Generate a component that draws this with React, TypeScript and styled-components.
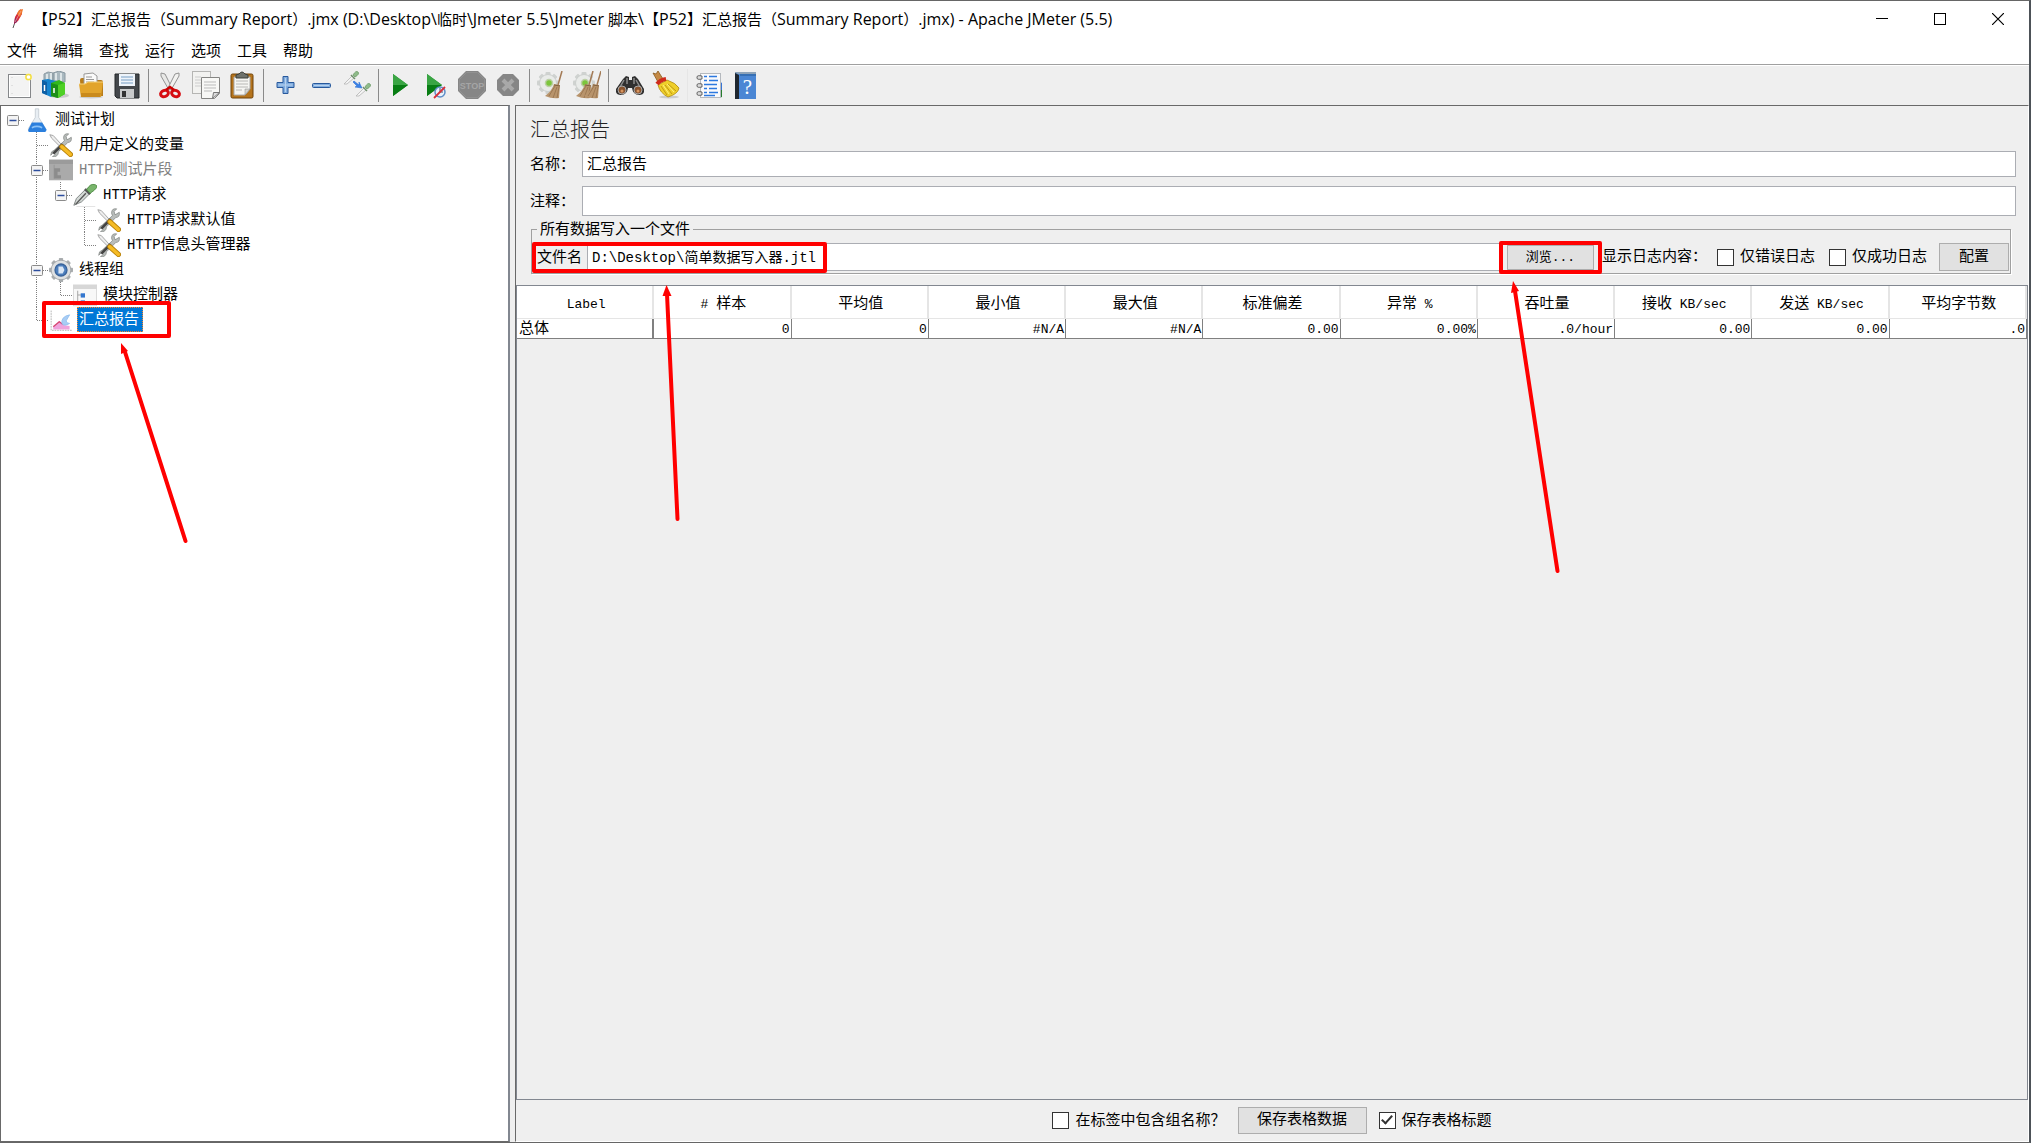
import React, { useState } from "react";
import styled, { createGlobalStyle, css } from "styled-components";

const GlobalStyle = createGlobalStyle`
  *, *::before, *::after { box-sizing: border-box; }
  body { margin: 0; background: #efefef; overflow: hidden; }
  button, input { font: inherit; color: inherit; }
`;

const cjk = `"Noto Sans CJK SC", sans-serif`;

const Window = styled.div`
  display: flex;
  flex-direction: column;
  height: 100vh;
  border: 1px solid #666;
  border-left: 0;
  border-right: 2px solid #4d5258;
  background: #efefef;
  color: #000;
  font-family: "Liberation Mono", ${cjk};
  font-size: 15px;
  line-height: 20px;
  position: relative;
`;

const TitleBar = styled.header`
  display: flex;
  align-items: center;
  height: 37px;
  background: #fff;
  padding: 0 2px 2px 8px;
  gap: 7px;
  font-family: "Open Sans", ${cjk};
`;

const TitleText = styled.h1`
  flex: 1;
  margin: 0;
  font-size: 15px;
  font-weight: 400;
  white-space: pre;
`;

const CaptionButton = styled.button`
  display: grid;
  place-items: center;
  width: 58px;
  height: 34px;
  padding: 0;
  border: 0;
  background: none;
  & + & { margin-left: -7px; }
`;

const MenuBar = styled.nav`
  display: flex;
  gap: 16px;
  height: 26px;
  padding: 0 0 2px 7px;
  background: #fff;
`;

const MenuButton = styled.button`
  padding: 0;
  border: 0;
  background: none;
  font-family: ${cjk};
`;

const ToolBar = styled.div`
  display: flex;
  align-items: center;
  height: 41px;
  padding-left: 1px;
  border-top: 1px solid #a0a0a0;
  box-shadow: inset 0 1px #fff;
`;

const ToolButton = styled.button`
  display: grid;
  place-items: center;
  width: 36px;
  height: 36px;
  padding: 0;
  border: 0;
  background: none;
`;

const Separator = styled.span<{ $faint?: boolean }>`
  width: 1px;
  height: 33px;
  margin: 0 3px;
  background: ${(p) => (p.$faint ? "#e6e6e6" : "#8a8a8a")};
`;

const Body = styled.main`
  flex: 1;
  display: flex;
  gap: 5px;
  min-height: 0;
`;

const TreePane = styled.aside`
  flex: 0 0 510px;
  padding-top: 1px;
  padding-bottom: 1px;
  background: #fff;
  border: 1px solid #696969;
  border-right: 2px solid #828790;
`;

const Tree = styled.ul`
  list-style: none;
  margin: 0;
  padding: 0;
`;

const TreeRow = styled.li`
  display: flex;
  align-items: center;
  height: 25px;
  svg { flex: none; display: block; }
`;

const ToggleCell = styled.button`
  padding: 0;
  border: 0;
  background: none;
  width: 24px;
  height: 25px;
`;

const TreeLabel = styled.span<{ $selected?: boolean; $disabled?: boolean }>`
  height: 25px;
  line-height: 25px;
  margin-left: 4px;
  padding: 0 3px 0 1px;
  border: 1px solid transparent;
  white-space: nowrap;
  ${(p) => p.$disabled && css`color: #808080;`}
  ${(p) =>
    p.$selected &&
    css`
      background: #0078d7;
      color: #fff;
      border: 1px dotted #ff8728;
    `}
`;

const Latin = styled.span<{ $size?: number }>`
  font-size: ${(p) => p.$size ?? 13}px;
`;

const Editor = styled.section`
  flex: 1;
  min-width: 0;
  display: flex;
  flex-direction: column;
  border: 1px solid #696969;
  border-right-color: #fff;
  border-bottom-color: #fff;
`;

const Heading = styled.h2`
  margin: 10px 14px;
  font-family: ${cjk};
  font-size: 20px;
  line-height: 25px;
  font-weight: 300;
  color: #222;
`;

const Field = styled.div`
  display: flex;
  align-items: center;
  margin: 0 12px 9px 14px;
`;

const FieldLabel = styled.label`
  flex: 0 0 52px;
  padding-top: 3px;
  white-space: nowrap;
`;

const TextInput = styled.input<{ $height: number; $size?: number }>`
  flex: 1;
  min-width: 0;
  height: ${(p) => p.$height}px;
  padding: 0 4px 2px 4px;
  border: 1px solid #abadb3;
  background: #fff;
  font-size: ${(p) => p.$size ?? 15}px;
  outline: 0;
`;

const Group = styled.fieldset`
  display: block;
  min-width: 0;
  margin: -5px 17px 11px 15px;
  padding: 4px 1px 2px 5px;
  border: 1px solid #a0a0a0;
  box-shadow: 1px 1px 0 #fff;
`;

const Legend = styled.legend`
  padding: 3px 3px 0;
  line-height: 16px;
`;

const GroupRow = styled.div`
  display: flex;
  align-items: center;
  height: 28px;
`;

const FileLabel = styled.label`
  flex: 0 0 50px;
  padding-top: 3px;
`;

const PushButton = styled.button<{ $width: number; $height: number; $small?: boolean }>`
  width: ${(p) => p.$width}px;
  height: ${(p) => p.$height}px;
  padding: 1px 0 0;
  border: 1px solid #adadad;
  background: #e1e1e1;
  font-size: ${(p) => (p.$small ? 13 : 15)}px;
  line-height: 20px;
`;

const BrowseSlot = styled.span`
  display: flex;
  padding: 0 8px 0 7px;
`;

const LogOptions = styled.div`
  display: flex;
  align-items: center;
  gap: 14px;
  margin-right: 12px;
  white-space: nowrap;
`;

const LogCaption = styled.span`
  padding-top: 2px;
  margin-right: -4px;
`;

const CheckLabel = styled.label`
  display: flex;
  align-items: center;
  gap: 6px;
  white-space: nowrap;
`;

const CheckText = styled.span`
  padding-top: 2px;
`;

const CheckBox = styled.input`
  appearance: none;
  flex: none;
  display: grid;
  place-items: center;
  width: 17px;
  height: 17px;
  margin: 0;
  border: 1px solid #333;
  background: #fff;
  &:checked::after {
    content: "";
    width: 6px;
    height: 11px;
    margin-bottom: 4px;
    border: solid #333;
    border-width: 0 2px 2px 0;
    transform: rotate(42deg);
  }
`;

const TableArea = styled.div`
  flex: 1;
  min-height: 0;
  border: 1px solid #828790;
`;

const Table = styled.table`
  width: 100%;
  table-layout: fixed;
  border-collapse: separate;
  border-spacing: 0;
  background: #fff;
  th, td { white-space: nowrap; overflow: hidden; font-weight: 400; }
  th {
    height: 33px;
    padding: 5px 0 0 3px;
    border-right: 2px solid #e5e5e5;
    border-bottom: 1px solid #e5e5e5;
    text-align: center;
  }
  td {
    height: 20px;
    line-height: 17px;
    padding: 2px 1px 0 3px;
    border-right: 1px solid #808080;
    border-bottom: 1px solid #808080;
    text-align: right;
  }
  td:first-child { text-align: left; padding-left: 2px; border-right-width: 2px; }
`;

const Footer = styled.footer`
  display: flex;
  align-items: center;
  justify-content: center;
  gap: 12px;
  height: 41px;
`;

const Annotations = styled.svg`
  position: absolute;
  left: 0;
  top: -1px;
  pointer-events: none;
`;

/* ---------- icons ---------- */

const Icon = ({ children, size = 28 }: { children: React.ReactNode; size?: number }) => (
  <svg width={size} height={size} viewBox="0 0 28 28" aria-hidden="true">
    {children}
  </svg>
);

const Feather = () => (
  <svg width="18" height="22" viewBox="0 0 18 22" aria-hidden="true">
    <path d="M5 20 L7 14" stroke="#555" strokeWidth="1" />
    <path d="M6 16 L7 9 L10 4 L13 1 L14 6 L10 13 Z" fill="#d32a3a" />
    <path d="M9 6 L11 2 L15 1 L14 5 L12 9 Z" fill="#f0792a" />
    <path d="M6 16 L7 10 L9 11 L9 14 Z" fill="#8d2560" />
    <path d="M7 14 L13 3" stroke="#f7a9a0" strokeWidth="0.7" />
  </svg>
);

const gearTeeth = (cx: number, cy: number, r: number, color: string) =>
  [0, 45, 90, 135].map((a) => (
    <rect key={a} x={cx - 2.5} y={cy - r} width="5" height={r * 2} rx="1" fill={color} transform={`rotate(${a} ${cx} ${cy})`} />
  ));

const NewIcon = () => (
  <Icon>
    <rect x="3.5" y="3.5" width="22" height="23" fill="#f3f3f3" stroke="#85878a" />
    <rect x="4.5" y="4.5" width="20" height="21" fill="none" stroke="#fff" />
    <path d="M7 6v19" stroke="#ccc" strokeDasharray="1 7" />
    <circle cx="23.5" cy="6" r="3.5" fill="#fff8a8" opacity=".7" />
    <circle cx="23.5" cy="6" r="2.6" fill="#fff" stroke="#f3df45" strokeWidth="1.5" />
  </Icon>
);

const TemplatesIcon = () => (
  <Icon>
    <ellipse cx="18" cy="24.5" rx="10" ry="2.5" fill="#bbb" opacity=".7" />
    <path d="M3 3l4-2 5 1v8H3zM12 2l6-2 6 2v9H12z" fill="#a9b8bf" stroke="#8b9aa2" />
    <path d="M6 3v6M10 2v7M15 2v7M20 2v8" stroke="#eef3f5" strokeWidth="1.5" />
    <path d="M1 9l6-1 8 2v13l-5 3-9-4z" fill="#1684cf" />
    <path d="M1 9l5 2v13l-5-2z" fill="#0e5fa5" />
    <path d="M3.500 14v6" stroke="#fff" strokeWidth="1.5" />
    <path d="M10 12l8-3 6 3v11l-7 4-7-2z" fill="#32b81c" />
    <path d="M10 12l7 2v13l-7-2z" fill="#1b8e17" />
    <path d="M17 14l7-2v11l-7 4z" fill="#4ed025" />
    <path d="M13 17v5" stroke="#fff" strokeWidth="1.5" />
  </Icon>
);

const OpenIcon = () => (
  <Icon>
    <ellipse cx="14" cy="26" rx="12" ry="1.5" fill="#ccc" />
    <path d="M3 9q0-2 2-2h4l2 2h13q2 0 2 2v14H4z" fill="#b87c1a" />
    <path d="M7 3l9-1 4 3v12H7z" fill="#fafafa" stroke="#999" />
    <path d="M9 6h6M9 8.5h8M9 11h8" stroke="#9a9a9a" />
    <path d="M2 13h6l3-2h15l-2 15H4z" fill="#e2a42b" />
    <path d="M2 13h6l3-2h15" stroke="#f6d27a" fill="none" />
    <path d="M4 22h20l-1 4H4z" fill="#c98a1c" />
  </Icon>
);

const SaveIcon = () => (
  <Icon>
    <path d="M2 3h24v24H4l-2-2z" fill="#43474b" stroke="#25282a" />
    <rect x="6" y="3" width="16" height="12" fill="#eef4fa" />
    <path d="M8 6h12M8 9h12M8 12h12" stroke="#9fbbd6" strokeWidth="1.5" />
    <rect x="7" y="18" width="14" height="9" fill="#c8cacb" />
    <rect x="9" y="20" width="4" height="6" fill="#333" />
  </Icon>
);

const CutIcon = () => (
  <Icon>
    <path d="M5 2l4 1 7 14-3 2L5 5z" fill="#e8e8e6" stroke="#929292" />
    <path d="M23 2l-4 1-7 14 3 2 8-14z" fill="#f2f2f0" stroke="#929292" />
    <ellipse cx="8.5" cy="22.5" rx="4" ry="3" fill="none" stroke="#d60d12" strokeWidth="3" transform="rotate(-20 8.5 22.5)" />
    <ellipse cx="19.5" cy="22.5" rx="4" ry="3" fill="none" stroke="#d60d12" strokeWidth="3" transform="rotate(20 19.5 22.5)" />
    <path d="M10 19l4-3 4 3" stroke="#c00" strokeWidth="2.5" fill="none" />
  </Icon>
);

const CopyIcon = () => (
  <Icon>
    <rect x="0.5" y="0.5" width="18" height="22" fill="#f2f2f0" stroke="#b5b5b3" />
    <path d="M3 6h6M3 9h6M3 12h6M3 15h6" stroke="#ccc" />
    <path d="M9.5 6.5h18v16l-5 5h-13z" fill="#f8f8f6" stroke="#858583" />
    <path d="M12 11h12M12 14h12M12 17h12M12 20h8" stroke="#bbb" />
    <path d="M27.5 21.5h-6l-1 6z" fill="#ddd" stroke="#777" />
  </Icon>
);

const PasteIcon = () => (
  <Icon>
    <rect x="3" y="3" width="22" height="24" rx="1.5" fill="#b5741c" stroke="#6f430a" />
    <path d="M6 6h16v12l-5 6H6z" fill="#f5f5f2" stroke="#aaa" />
    <path d="M8 10h12M8 13h12M8 16h12M8 19h6" stroke="#b8b8b6" />
    <path d="M22 18h-5v6z" fill="#d5d5d0" stroke="#888" strokeWidth=".5" />
    <path d="M8 7V4l3-1q3-4 6 0l3 1v3z" fill="#6d716b" stroke="#3d403b" />
  </Icon>
);

const PlusIcon = () => (
  <Icon>
    <path d="M12 5.5h5v6h6v5h-6v6h-5v-6H6v-5h6z" fill="#81addf" stroke="#28599c" />
    <path d="M14.5 7v14M7.5 14h14" stroke="#b8d2ee" />
  </Icon>
);

const MinusIcon = () => (
  <Icon>
    <rect x="5.5" y="12.5" width="18" height="4" rx="1" fill="#81addf" stroke="#28599c" />
    <path d="M7 14.5h15" stroke="#b8d2ee" />
  </Icon>
);

const pipette = (tx: number, ty: number) => (
  <g transform={`translate(${tx} ${ty})`}>
    <path d="M0 13L8 5l2 2-7 6z" fill="#f4f4f4" stroke="#b5b5b5" strokeWidth=".8" />
    <path d="M7 4l4 4" stroke="#6f8f6c" strokeWidth="1.5" />
    <path d="M9 4q3-5 5-3t-3 5z" fill="#8fbb8a" stroke="#6f9e6a" strokeWidth=".8" />
  </g>
);

const ToggleIcon = () => (
  <Icon>
    {pipette(1, 0)}
    {pipette(13, 12)}
    <path d="M11 10l5 4v-3l3 6-7-1 2-1-4-4z" fill="#3a82e8" stroke="#2d6fd2" strokeWidth=".6" />
  </Icon>
);

const PlayShape = ({ x = 0 }: { x?: number }) => (
  <g transform={`translate(${x} 0)`}>
    <path d="M7 3L22 14 7 25z" fill="#23952d" />
    <path d="M7 3L22 14H7z" fill="#3aa544" />
    <path d="M7 14h15L7 25z" fill="#087d14" />
  </g>
);

const PlayIcon = () => (
  <Icon>
    <PlayShape />
  </Icon>
);

const PlayNoPauseIcon = () => (
  <Icon>
    <PlayShape x={-2} />
    <circle cx="18" cy="21" r="5" fill="#e9f1fb" stroke="#5f8ec7" strokeWidth="1.5" />
    <path d="M18 17v4h3" stroke="#456" fill="none" />
    <path d="M12 27L23 16" stroke="#d8303a" strokeWidth="1.8" />
  </Icon>
);

const StopIcon = () => (
  <Icon>
    <path d="M8 0h12l8 8v12l-8 8H8l-8-8V8z" fill="#868686" />
    <path d="M8.5 1.5h11l7 7v11l-7 7h-11l-7-7v-11z" fill="none" stroke="#919191" />
    <text x="14" y="18" textAnchor="middle" fontFamily="Liberation Sans, sans-serif" fontWeight="700" fontSize="9" fill="#a5a5a5">STOP</text>
  </Icon>
);

const ShutdownIcon = () => (
  <Icon>
    <path d="M9 3h10l6 6v10l-6 6H9l-6-6V9z" fill="#868686" />
    <path d="M9 9l10 10M19 9L9 19" stroke="#a9a9a9" strokeWidth="4" />
  </Icon>
);

const BroomHead = ({ x }: { x: number }) => (
  <g transform={`translate(${x} 0)`}>
    <path d="M25 0l-4 14" stroke="#a37a55" strokeWidth="1.5" />
    <path d="M17 13l6 1-1 13q-7 1-14-2 7-5 9-12z" fill="#b8946c" />
    <path d="M18 15l-6 10M20 16l-4 11M22 16l-2 11" stroke="#94714d" strokeWidth=".8" />
    <path d="M17 14l6 1" stroke="#80603f" />
  </g>
);

const SmallGear = () => (
  <g>
    {gearTeeth(11, 12, 11, "#cfd2d0")}
    <circle cx="11" cy="12" r="8.5" fill="#e9ebe9" stroke="#cccfcd" />
    <circle cx="12" cy="12" r="3.5" fill="#7cc63c" stroke="#bcd0a6" strokeWidth="1.5" />
  </g>
);

const ClearIcon = () => (
  <Icon>
    <SmallGear />
    <BroomHead x={0} />
  </Icon>
);

const ClearAllIcon = () => (
  <Icon>
    <SmallGear />
    <BroomHead x={-5} />
    <BroomHead x={3} />
  </Icon>
);

const SearchIcon = () => (
  <Icon>
    <path d="M10 5l3 1v3h3V6l3-1 3 3 6 10q1 6-5 6-6 0-7-7h-4q-1 7-7 7-6 0-5-6L7 8z" fill="#303030" />
    <path d="M8 9l-4 7M20 9l4 7M11 7v6M18 7v6" stroke="#8c8c8c" strokeWidth="1.5" />
    <circle cx="6" cy="19" r="4" fill="#89542f" stroke="#a8a8a8" />
    <circle cx="22" cy="19" r="4" fill="#89542f" stroke="#a8a8a8" />
    <circle cx="6" cy="20" r="1.5" fill="#d8955f" />
    <circle cx="22" cy="20" r="1.5" fill="#d8955f" />
  </Icon>
);

const ResetIcon = () => (
  <Icon>
    <ellipse cx="17" cy="26" rx="10" ry="1.5" fill="#ccc" />
    <path d="M1 2l3 1 2-3 5 8-5 3z" fill="#c58a45" stroke="#8a5a1e" strokeWidth=".8" />
    <path d="M6 14l9-5q9 3 12 8-1 6-11 9-8-4-10-12z" fill="#efcf2a" stroke="#b08a10" strokeWidth=".8" />
    <path d="M9 15l6 9M13 14l7 9M16 13l8 7" stroke="#c19a14" />
    <path d="M11 14l6 9M15 13l7 8" stroke="#fff27c" />
    <path d="M5 13q3-4 9-5" stroke="#cf2b1c" strokeWidth="4" fill="none" />
  </Icon>
);

const FunctionIcon = () => (
  <Icon>
    <path d="M24 18l3 1v7l-3 1z" fill="#257c2c" />
    <path d="M24 10l3 2v7h-3z" fill="#3774d4" />
    <rect x="5.5" y="2.5" width="20" height="24" fill="#f9fafc" stroke="#b5b9be" />
    <path d="M9 5.5h3M14 5.5h8M9 9.500h3M14 9.500h9M9 13.500h13M9 17.500h3M14 17.500h8M9 21.500h3M14 21.500h9M9 24.500h11" stroke="#2d79df" strokeWidth="1.4" />
    {[6, 14, 22].map((y) => (
      <path key={y} d={`M2 ${y}q0-2 5-1v3q-5 1-5-1z`} fill="#ddd" stroke="#444" strokeWidth=".8" />
    ))}
  </Icon>
);

const HelpIcon = () => (
  <Icon>
    <path d="M4 1h21v4H4z" fill="#8ea3b8" />
    <path d="M4 2l3 1h18v25H4z" fill="#4a86d4" />
    <path d="M4 2l4 2v24H4z" fill="#1f2730" />
    <path d="M9 4h16" stroke="#235894" />
    <text x="16.5" y="23" textAnchor="middle" fontFamily="Liberation Serif, serif" fontSize="21" fill="#fff">?</text>
  </Icon>
);

const FlaskIcon = () => (
  <Icon size={24}>
    <path d="M12 1h4v10l8 13q1 3-2 3H6q-3 0-2-3l8-13z" fill="#e8eef3" stroke="#c3cbd2" />
    <path d="M8 17h12l5 8q0 3-3 3H6q-3 0-2-3z" fill="#2b7fdd" />
    <path d="M8 23q6-3 12 0" stroke="#8bc2f7" strokeWidth="2" fill="none" />
  </Icon>
);

const ToolsIcon = () => (
  <Icon size={24}>
    <path d="M1 2l4 1 10 11-2 2L3 6z" fill="#eee" stroke="#9c9c9c" />
    <path d="M26 5l-5 3-1-4 3-3q-6-1-6 5l1 3L6 20q-4 1-4 6l3-3 2 2-3 3q7 0 7-6L22 11q5 0 4-6z" fill="#b9bdbb" stroke="#7b7f7d" strokeWidth=".8" />
    <path d="M16 13L8 21l-3 3" stroke="#444" strokeWidth="3" />
    <path d="M15 16l10 9" stroke="#b88108" strokeWidth="6" strokeLinecap="round" />
    <path d="M15 16l10 9" stroke="#f5bb25" strokeWidth="4" strokeLinecap="round" />
  </Icon>
);

const FragmentIcon = () => (
  <Icon size={24}>
    <rect x="0" y="2" width="28" height="24" fill="#aaa" />
    <path d="M0 2h28v5H0z" fill="#9b9b9b" />
    <path d="M6 8v16" stroke="#959595" />
    <path d="M6 12h7v4h-3v4h4v4H6z" fill="#8c8c8c" />
  </Icon>
);

const SamplerIcon = () => (
  <Icon size={24}>
    <path d="M4 27.500h22" stroke="#ddd" />
    <path d="M1 26l3-8L14 8l5 5-9 9z" fill="#d4d9d6" stroke="#737977" />
    <path d="M3 25L15 12" stroke="#555" strokeWidth="1.5" />
    <path d="M14 7l6 6" stroke="#555" strokeWidth="3" />
    <path d="M16 8q4-8 10-6t-6 10z" fill="#79b56c" stroke="#4d8a44" />
  </Icon>
);

const GearIcon = () => (
  <Icon size={24}>
    {gearTeeth(14, 14, 14, "#a9adaf")}
    <circle cx="14" cy="14" r="11.5" fill="#dfe1e2" stroke="#a0a4a6" />
    <circle cx="14" cy="14" r="7" fill="#4d7fbd" stroke="#39639b" strokeWidth="1.5" />
    <path d="M11 10h5l2 4-2 4h-5z" fill="#dbe7f5" />
  </Icon>
);

const ControllerIcon = () => (
  <Icon size={24}>
    <rect x="0.5" y="2.5" width="27" height="24" fill="#f8f8f8" stroke="#d6d6d6" />
    <path d="M0 2h28v5H0z" fill="#d7d7d7" />
    <path d="M5.5 9v16M5.5 14h4M5.5 22h4" stroke="#999" />
    <rect x="9" y="12" width="5" height="5" fill="#3477cf" />
    <rect x="9" y="20" width="5" height="4" fill="#6d9edf" />
  </Icon>
);

const ChartIcon = () => (
  <Icon size={24}>
    <path d="M2.500 3v23h24" stroke="#aaa" fill="none" strokeDasharray="2 1" />
    <path d="M5 25v-4l7-6 6 5 6 1v4z" fill="#efa3dc" />
    <path d="M5 22l7-6 4 3" stroke="#d74b70" strokeWidth="1.5" fill="none" />
    <path d="M15 18q-1-8 9-10l-4 7q0 3 4 3-6 4-9 0z" fill="#a9cdf4" stroke="#8fbdf0" />
  </Icon>
);

const Guide = ({ kind }: { kind: string }) => {
  const dots = { stroke: "#808080", strokeDasharray: "1 1" };
  return (
    <svg width="24" height="25" viewBox="0 0 24 25" aria-hidden="true">
      {(kind === "v" || kind === "t" || kind === "e") && <path d="M11.5 0v25" {...dots} />}
      {(kind === "l" || kind === "f") && <path d="M11.5 0v13" {...dots} />}
      {kind !== "v" && kind !== "" && <path d="M12 13.5h12" {...dots} />}
      {(kind === "e" || kind === "f" || kind === "r") && (
        <g>
          <rect x="6.5" y="8.5" width="11" height="10" rx="1" fill="#f4f4f4" stroke="#8b8b8b" />
          <path d="M8.5 13.5h7" stroke="#2c4d9e" strokeWidth="1.5" />
        </g>
      )}
    </svg>
  );
};

/* ---------- data ---------- */

type Node = {
  guides: string[];
  icon: React.ReactNode;
  latin?: string;
  text: string;
  disabled?: boolean;
};

const nodes: Node[] = [
  { guides: ["r"], icon: <FlaskIcon />, text: "测试计划" },
  { guides: ["", "t"], icon: <ToolsIcon />, text: "用户定义的变量" },
  { guides: ["", "e"], icon: <FragmentIcon />, latin: "HTTP", text: "测试片段", disabled: true },
  { guides: ["", "v", "f"], icon: <SamplerIcon />, latin: "HTTP", text: "请求" },
  { guides: ["", "v", "", "t"], icon: <ToolsIcon />, latin: "HTTP", text: "请求默认值" },
  { guides: ["", "v", "", "l"], icon: <ToolsIcon />, latin: "HTTP", text: "信息头管理器" },
  { guides: ["", "e"], icon: <GearIcon />, text: "线程组" },
  { guides: ["", "v", "l"], icon: <ControllerIcon />, text: "模块控制器" },
  { guides: ["", "l"], icon: <ChartIcon />, text: "汇总报告" },
];

const fileTitle =
  "【P52】汇总报告（Summary Report）.jmx (D:\\Desktop\\临时\\Jmeter 5.5\\Jmeter 脚本\\【P52】汇总报告（Summary Report）.jmx) - Apache JMeter (5.5)";

const menus = ["文件", "编辑", "查找", "运行", "选项", "工具", "帮助"];

const toolGroups: [string, React.ComponentType][][] = [
  [["新建", NewIcon], ["模板", TemplatesIcon], ["打开", OpenIcon], ["保存", SaveIcon]],
  [["剪切", CutIcon], ["复制", CopyIcon], ["粘贴", PasteIcon]],
  [["展开", PlusIcon], ["折叠", MinusIcon], ["切换", ToggleIcon]],
  [["启动", PlayIcon], ["不停顿启动", PlayNoPauseIcon], ["停止", StopIcon], ["关闭", ShutdownIcon]],
  [["清除", ClearIcon], ["清除全部", ClearAllIcon]],
  [["查找", SearchIcon], ["重置查找", ResetIcon]],
  [["函数助手", FunctionIcon], ["帮助", HelpIcon]],
];

const columns: { head: React.ReactNode; value: React.ReactNode }[] = [
  { head: <Latin>Label</Latin>, value: "总体" },
  { head: <><Latin># </Latin>样本</>, value: <Latin>0</Latin> },
  { head: "平均值", value: <Latin>0</Latin> },
  { head: "最小值", value: <Latin>#N/A</Latin> },
  { head: "最大值", value: <Latin>#N/A</Latin> },
  { head: "标准偏差", value: <Latin>0.00</Latin> },
  { head: <>异常<Latin> %</Latin></>, value: <Latin>0.00%</Latin> },
  { head: "吞吐量", value: <Latin>.0/hour</Latin> },
  { head: <>接收<Latin> KB/sec</Latin></>, value: <Latin>0.00</Latin> },
  { head: <>发送<Latin> KB/sec</Latin></>, value: <Latin>0.00</Latin> },
  { head: "平均字节数", value: <Latin>.0</Latin> },
];

const Marks = () => (
  <Annotations width="2029" height="600" viewBox="0 0 2029 600" aria-hidden="true">
    <g fill="none" stroke="#f00" strokeWidth="4" strokeLinejoin="round" strokeLinecap="round">
      <rect x="44" y="303" width="125" height="33" />
      <rect x="534" y="244" width="291" height="27" />
      <rect x="1501" y="243" width="99" height="29" />
      <path d="M125 352L185.500 541" />
      <path d="M667 294L677.500 519" />
      <path d="M1515 291L1557.500 571" />
    </g>
    <g fill="#f00">
      <path d="M121 343l7 8-7 3z" />
      <path d="M666.500 285l5 11h-9z" />
      <path d="M1513 281l6 10-8 2z" />
    </g>
  </Annotations>
);

export default function App() {
  const [selected, setSelected] = useState(8);
  return (
    <>
      <GlobalStyle />
      <Window>
        <TitleBar>
          <Feather />
          <TitleText>
            {fileTitle.split(/([\x20-\x7e]+)/).map((part, i) =>
              i % 2 ? (
                <Latin key={i} $size={16}>{part}</Latin>
              ) : (
                part
              )
            )}
          </TitleText>
          <CaptionButton aria-label="最小化">
            <svg width="12" height="12"><path d="M0 5.5h12" stroke="#000" /></svg>
          </CaptionButton>
          <CaptionButton aria-label="最大化">
            <svg width="12" height="12"><rect x=".5" y=".5" width="11" height="11" fill="none" stroke="#000" /></svg>
          </CaptionButton>
          <CaptionButton aria-label="关闭窗口">
            <svg width="12" height="12"><path d="M0 0l12 12M12 0L0 12" stroke="#000" strokeWidth="1.2" /></svg>
          </CaptionButton>
        </TitleBar>
        <MenuBar>
          {menus.map((m) => (
            <MenuButton key={m}>{m}</MenuButton>
          ))}
        </MenuBar>
        <ToolBar role="toolbar">
          {toolGroups.map((group, i) => (
            <React.Fragment key={i}>
              {i > 0 && <Separator $faint={i === 6} />}
              {group.map(([name, Glyph]) => (
                <ToolButton key={name} aria-label={name}>
                  <Glyph />
                </ToolButton>
              ))}
            </React.Fragment>
          ))}
        </ToolBar>
        <Body>
          <TreePane>
            <Tree role="tree">
              {nodes.map((n, i) => (
                <TreeRow key={i} role="treeitem" aria-selected={i === selected} onClick={() => setSelected(i)}>
                  {n.guides.map((g, k) =>
                    g === "e" || g === "f" || g === "r" ? (
                      <ToggleCell key={k} aria-label="折叠节点">
                        <Guide kind={g} />
                      </ToggleCell>
                    ) : (
                      <Guide key={k} kind={g} />
                    )
                  )}
                  {n.icon}
                  <TreeLabel $selected={i === selected} $disabled={n.disabled}>
                    {n.latin && <Latin $size={14}>{n.latin}</Latin>}
                    {n.text}
                  </TreeLabel>
                </TreeRow>
              ))}
            </Tree>
          </TreePane>
          <Editor>
            <Heading>汇总报告</Heading>
            <Field>
              <FieldLabel htmlFor="name">名称：</FieldLabel>
              <TextInput id="name" $height={26} defaultValue="汇总报告" />
            </Field>
            <Field>
              <FieldLabel htmlFor="comment">注释：</FieldLabel>
              <TextInput id="comment" $height={30} />
            </Field>
            <Group>
              <Legend>所有数据写入一个文件</Legend>
              <GroupRow>
                <FileLabel htmlFor="file">文件名</FileLabel>
                <TextInput id="file" $height={28} $size={14} defaultValue={"D:\\Desktop\\简单数据写入器.jtl"} />
                <BrowseSlot>
                  <PushButton $width={87} $height={25} $small>浏览...</PushButton>
                </BrowseSlot>
                <LogOptions>
                  <LogCaption>显示日志内容：</LogCaption>
                  <CheckLabel><CheckBox type="checkbox" /><CheckText>仅错误日志</CheckText></CheckLabel>
                  <CheckLabel><CheckBox type="checkbox" /><CheckText>仅成功日志</CheckText></CheckLabel>
                </LogOptions>
                <PushButton $width={70} $height={28}>配置</PushButton>
              </GroupRow>
            </Group>
            <TableArea>
              <Table>
                <thead>
                  <tr>{columns.map((c, i) => <th key={i} scope="col">{c.head}</th>)}</tr>
                </thead>
                <tbody>
                  <tr>{columns.map((c, i) => <td key={i}>{c.value}</td>)}</tr>
                </tbody>
              </Table>
            </TableArea>
            <Footer>
              <CheckLabel><CheckBox type="checkbox" /><CheckText>在标签中包含组名称？</CheckText></CheckLabel>
              <PushButton $width={129} $height={27}>保存表格数据</PushButton>
              <CheckLabel><CheckBox type="checkbox" defaultChecked /><CheckText>保存表格标题</CheckText></CheckLabel>
            </Footer>
          </Editor>
        </Body>
        <Marks />
      </Window>
    </>
  );
}
